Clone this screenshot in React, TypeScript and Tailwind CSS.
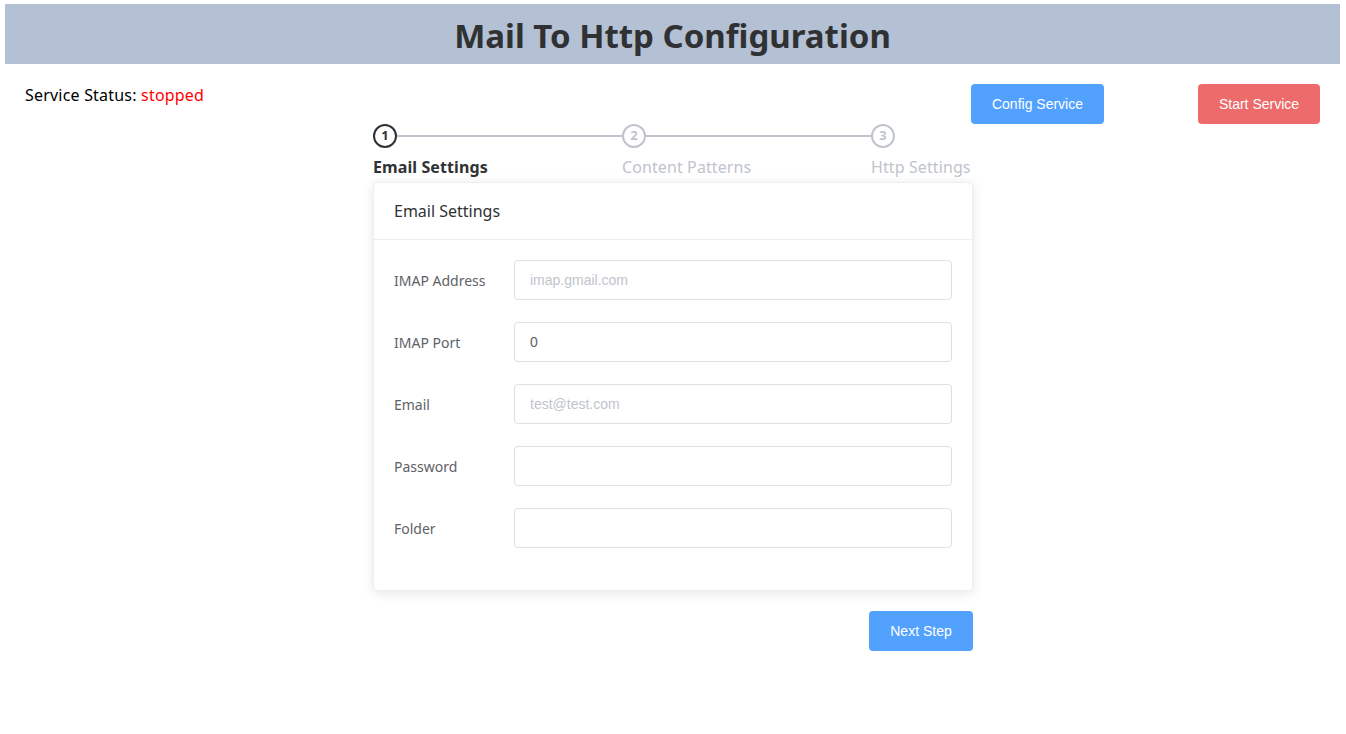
import React from "react";

const Step = ({ n, label, active, last }: { n: number; label: string; active?: boolean; last?: boolean }) => (
  <div className={last ? "shrink-0" : "basis-[249px] shrink-0"}>
    <div className="relative h-[24px] flex items-center">
      <div
        className={`w-[24px] h-[24px] rounded-full border-2 flex items-center justify-center text-[13px] font-bold bg-white ${
          active ? "border-[#303133] text-[#303133]" : "border-[#c0c4cc] text-[#c0c4cc]"
        }`}
      >
        {n}
      </div>
      {!last && <div className="flex-1 h-[2px] bg-[#c0c4cc]" />}
    </div>
    <div
      className={`mt-[7px] text-[16px] leading-[24px] tracking-[0.1px] ${
        active ? "font-bold text-[#303133]" : "text-[#c0c4cc]"
      }`}
    >
      {label}
    </div>
  </div>
);

const Field = ({ label, placeholder, value }: { label: string; placeholder?: string; value?: string }) => (
  <div className="flex items-center mb-[22px] last:mb-0">
    <label className="w-[120px] text-[14px] text-[#606266]">{label}</label>
    <input
      className="flex-1 h-[40px] border border-[#dcdfe6] rounded-[4px] px-[15px] text-[14px] text-[#606266] placeholder:text-[#c0c4cc] outline-none"
      style={{ fontFamily: "'Liberation Sans', Arial, sans-serif" }}
      placeholder={placeholder}
      defaultValue={value}
    />
  </div>
);

export default function App() {
  return (
    <div className="min-h-[734px] bg-white" style={{ fontFamily: "'Noto Sans', 'Open Sans', sans-serif" }}>
      <div className="ml-[5px] mr-[6px] pt-[4px]">
        <div className="h-[60px] bg-[#b4c0d3] flex items-center justify-center">
          <h1 className="text-[33px] font-bold text-[#303133] leading-none pt-[2px]">Mail To Http Configuration</h1>
        </div>
      </div>
      <div className="flex items-start mt-[20px] pl-[25px] pr-[26px] h-[40px]">
        <div className="text-[16px] leading-[22px] text-black tracking-[0.2px]">
          Service Status: <span className="text-[#ff0000]">stopped</span>
        </div>
        <div className="ml-auto flex gap-[94px]">
          <button
            className="h-[40px] w-[133px] rounded-[4px] bg-[#53a1ff] text-white text-[14px]"
            style={{ fontFamily: "'Liberation Sans', Arial, sans-serif" }}
          >
            Config Service
          </button>
          <button
            className="h-[40px] w-[122px] rounded-[4px] bg-[#ed6b6b] text-white text-[14px]"
            style={{ fontFamily: "'Liberation Sans', Arial, sans-serif" }}
          >
            Start Service
          </button>
        </div>
      </div>
      <div className="w-[600px] mx-auto">
        <div className="flex">
          <Step n={1} label="Email Settings" active />
          <Step n={2} label="Content Patterns" />
          <Step n={3} label="Http Settings" last />
        </div>
        <div className="mt-[3px] border border-[#ebeef5] rounded-[4px] bg-white shadow-[0_2px_12px_0_rgba(0,0,0,0.1)]">
          <div className="h-[57px] px-[20px] flex items-center border-b border-[#ebeef5] text-[16px] text-[#303133]">
            Email Settings
          </div>
          <div className="p-[20px] pb-[42px]">
            <Field label="IMAP Address" placeholder="imap.gmail.com" />
            <Field label="IMAP Port" value="0" />
            <Field label="Email" placeholder="test@test.com" />
            <Field label="Password" />
            <Field label="Folder" />
          </div>
        </div>
        <div className="flex justify-end mt-[20px]">
          <button
            className="h-[40px] w-[104px] rounded-[4px] bg-[#53a1ff] text-white text-[14px]"
            style={{ fontFamily: "'Liberation Sans', Arial, sans-serif" }}
          >
            Next Step
          </button>
        </div>
      </div>
    </div>
  );
}
